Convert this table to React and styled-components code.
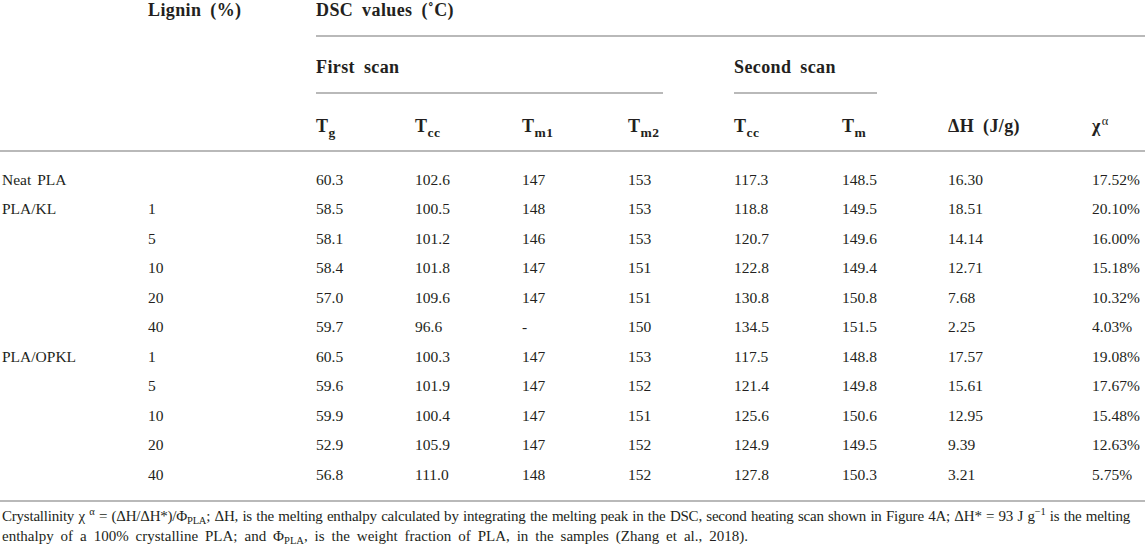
import styled, { createGlobalStyle } from "styled-components";

const COLS = "148px 168px 99px 107px 106px 106px 108px 106px 144px 1fr";
const RULE = "2px solid #b9b9b9";

const GlobalStyle = createGlobalStyle`
  html, body {
    margin: 0;
    padding: 0;
    background: #ffffff;
  }
  body {
    font-family: "Liberation Serif", "Times New Roman", serif;
    color: #231f20;
  }
`;

const Page = styled.div`
  width: 1145px;
  display: flex;
  flex-direction: column;
`;

const HeadGrid = styled.div`
  display: grid;
  grid-template-columns: ${COLS};
  grid-template-rows: 37px 57px 58px;
  font-weight: 700;
  font-size: 18px;
  line-height: 20px;
  letter-spacing: 0.4px;
  word-spacing: 4px;
`;

const HeadCell = styled.div`
  grid-column: span ${(p) => p.$span || 1};
  box-sizing: border-box;
  padding-top: ${(p) => p.$pt || 0}px;
  padding-left: ${(p) => (p.$first ? 2 : 0)}px;
  border-bottom: ${(p) => (p.$rule ? RULE : "none")};
  white-space: nowrap;
`;

const GroupCell = styled.div`
  grid-column: span 4;
  height: 100%;
`;

const GroupLabel = styled.div`
  box-sizing: border-box;
  width: ${(p) => p.$w}px;
  height: 100%;
  padding-top: 20px;
  border-bottom: ${RULE};
`;

const Sub = styled.sub`
  font-size: 13.5px;
  letter-spacing: 0.6px;
  vertical-align: -5px;
  line-height: 0;
`;

const Sup = styled.sup`
  font-size: 12.5px;
  font-weight: 400;
  vertical-align: 7px;
  line-height: 0;
  margin-left: 1px;
`;

const Body = styled.div`
  display: grid;
  grid-template-columns: ${COLS};
  grid-auto-rows: 29.5px;
  align-items: center;
  padding: 13px 0 10px;
  border-bottom: ${RULE};
  font-size: 15.5px;
  line-height: 20px;
  word-spacing: 2px;
`;

const Cell = styled.div`
  padding-left: ${(p) => (p.$first ? 2 : 0)}px;
  white-space: nowrap;
`;

const Note = styled.div`
  box-sizing: border-box;
  width: 1130px;
  padding: 4px 0 0 2px;
  font-size: 15px;
  line-height: 20px;
`;

const NoteLine = styled.div`
  white-space: nowrap;
  text-align: ${(p) => (p.$justify ? "justify" : "left")};
  text-align-last: ${(p) => (p.$justify ? "justify" : "left")};
  letter-spacing: ${(p) => (p.$justify ? -0.22 : 0)}px;
  word-spacing: ${(p) => (p.$justify ? 0 : 3.2)}px;
`;

const NoteSub = styled.sub`
  font-size: 10.5px;
  vertical-align: -3px;
  line-height: 0;
`;

const NoteSup = styled.sup`
  font-size: 10.5px;
  vertical-align: 6px;
  line-height: 0;
`;

const rows = [
  ["Neat PLA", "", "60.3", "102.6", "147", "153", "117.3", "148.5", "16.30", "17.52%"],
  ["PLA/KL", "1", "58.5", "100.5", "148", "153", "118.8", "149.5", "18.51", "20.10%"],
  ["", "5", "58.1", "101.2", "146", "153", "120.7", "149.6", "14.14", "16.00%"],
  ["", "10", "58.4", "101.8", "147", "151", "122.8", "149.4", "12.71", "15.18%"],
  ["", "20", "57.0", "109.6", "147", "151", "130.8", "150.8", "7.68", "10.32%"],
  ["", "40", "59.7", "96.6", "-", "150", "134.5", "151.5", "2.25", "4.03%"],
  ["PLA/OPKL", "1", "60.5", "100.3", "147", "153", "117.5", "148.8", "17.57", "19.08%"],
  ["", "5", "59.6", "101.9", "147", "152", "121.4", "149.8", "15.61", "17.67%"],
  ["", "10", "59.9", "100.4", "147", "151", "125.6", "150.6", "12.95", "15.48%"],
  ["", "20", "52.9", "105.9", "147", "152", "124.9", "149.5", "9.39", "12.63%"],
  ["", "40", "56.8", "111.0", "148", "152", "127.8", "150.3", "3.21", "5.75%"],
];

const subHeads = [
  ["T", "g"],
  ["T", "cc"],
  ["T", "m1"],
  ["T", "m2"],
  ["T", "cc"],
  ["T", "m"],
];

const App = () => {
  return (
    <>
      <GlobalStyle />
      <Page>
        <HeadGrid>
          {/* top row */}
          <HeadCell $first />
          <HeadCell>Lignin (%)</HeadCell>
          <HeadCell $span={8} $rule>
            DSC values (˚C)
          </HeadCell>

          {/* scan groups */}
          <HeadCell $first />
          <HeadCell />
          <GroupCell>
            <GroupLabel $w={347}>First scan</GroupLabel>
          </GroupCell>
          <GroupCell>
            <GroupLabel $w={143}>Second scan</GroupLabel>
          </GroupCell>

          {/* column names */}
          <HeadCell $first $rule $pt={22} />
          <HeadCell $rule $pt={22} />
          {subHeads.map(([t, s], i) => (
            <HeadCell key={`sh${i}`} $rule $pt={22}>
              {t}
              <Sub>{s}</Sub>
            </HeadCell>
          ))}
          <HeadCell $rule $pt={22}>
            ΔH (J/g)
          </HeadCell>
          <HeadCell $rule $pt={22}>
            χ<Sup>α</Sup>
          </HeadCell>
        </HeadGrid>

        <Body>
          {rows.map((row, r) =>
            row.map((v, c) => (
              <Cell key={`${r}-${c}`} $first={c === 0}>
                {v}
              </Cell>
            ))
          )}
        </Body>

        <Note>
          <NoteLine $justify>
            Crystallinity χ <NoteSup>α</NoteSup> = (ΔH/ΔH*)/Φ<NoteSub>PLA</NoteSub>; ΔH, is the
            melting enthalpy calculated by integrating the melting peak in the DSC, second heating
            scan shown in Figure 4A; ΔH* = 93 J g<NoteSup>−1</NoteSup> is the melting
          </NoteLine>
          <NoteLine>
            enthalpy of a 100% crystalline PLA; and Φ<NoteSub>PLA</NoteSub>, is the weight fraction
            of PLA, in the samples (Zhang et al., 2018).
          </NoteLine>
        </Note>
      </Page>
    </>
  );
};

export default App;
